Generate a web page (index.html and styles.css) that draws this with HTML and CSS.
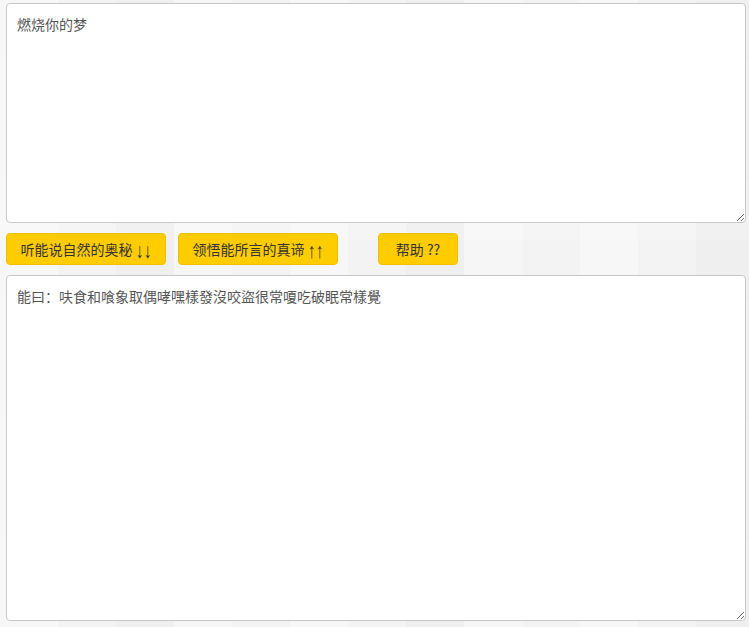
FILE: index.html
```html
<!DOCTYPE html>
<html lang="zh">
<head>
<meta charset="utf-8">
<title>熊曰</title>
<link rel="stylesheet" href="styles.css">
</head>
<body>
<div class="wrap">
  <textarea class="box box-top">燃烧你的梦</textarea>
  <div class="actions">
    <button class="btn btn-wide">听能说自然的奥秘 <span class="arr">↓↓</span></button>
    <button class="btn btn-wide">领悟能所言的真谛 <span class="arr">↑↑</span></button>
    <button class="btn btn-help">帮助 ??</button>
  </div>
  <textarea class="box box-bottom">能曰：呋食和喰象取偶哮嘿樣發沒咬盜很常嗄吃破眠常樣覺</textarea>
</div>
</body>
</html>
```

FILE: styles.css
```css
html, body {
  margin: 0;
  padding: 0;
}
body {
  background-color: #f3f3f3;
  background-image:
    linear-gradient(90deg, rgba(255,255,255,0.35) 0 58px, transparent 58px 116px, rgba(0,0,0,0.015) 116px 174px, rgba(255,255,255,0.25) 174px 232px, transparent 232px),
    linear-gradient(0deg, rgba(255,255,255,0.2) 0 50%, transparent 50%);
  background-size: 290px 100%, 100% 120px;
  font-family: "Microsoft YaHei", "Noto Sans CJK SC", sans-serif;
  width: 749px;
  height: 627px;
  overflow: hidden;
}
.wrap {
  padding: 3px 0 0 6px;
  display: flex;
  flex-direction: column;
}
.box {
  box-sizing: border-box;
  width: 740px;
  margin: 0;
  padding: 10px 10px;
  border: 1px solid #c8c8c8;
  border-radius: 4px;
  background: #fff;
  font-family: "Microsoft YaHei", "Noto Sans CJK SC", sans-serif;
  font-size: 14px;
  line-height: 20px;
  color: #555;
  outline: none;
  resize: both;
  display: block;
}
.box-top {
  height: 220px;
}
.box-bottom {
  height: 346px;
}
.actions {
  display: flex;
  margin: 10px 0 10px 0;
  height: 32px;
}
.btn {
  box-sizing: border-box;
  height: 32px;
  padding: 0;
  border: 1px solid #f0c000;
  border-radius: 4px;
  background: #ffcc00;
  color: #333;
  font-family: "Microsoft YaHei", "Noto Sans CJK SC", sans-serif;
  font-size: 14px;
  cursor: pointer;
}
.arr {
  display: inline-block;
  font-family: "Liberation Sans", "DejaVu Sans", sans-serif;
  font-size: 16px;
  line-height: 1;
  transform: translateY(1px) scaleY(1.3);
}
.btn-wide {
  width: 160px;
  margin-right: 12px;
}
.btn-wide + .btn-wide {
  margin-right: 40px;
}
.btn-help {
  width: 80px;
}
```
